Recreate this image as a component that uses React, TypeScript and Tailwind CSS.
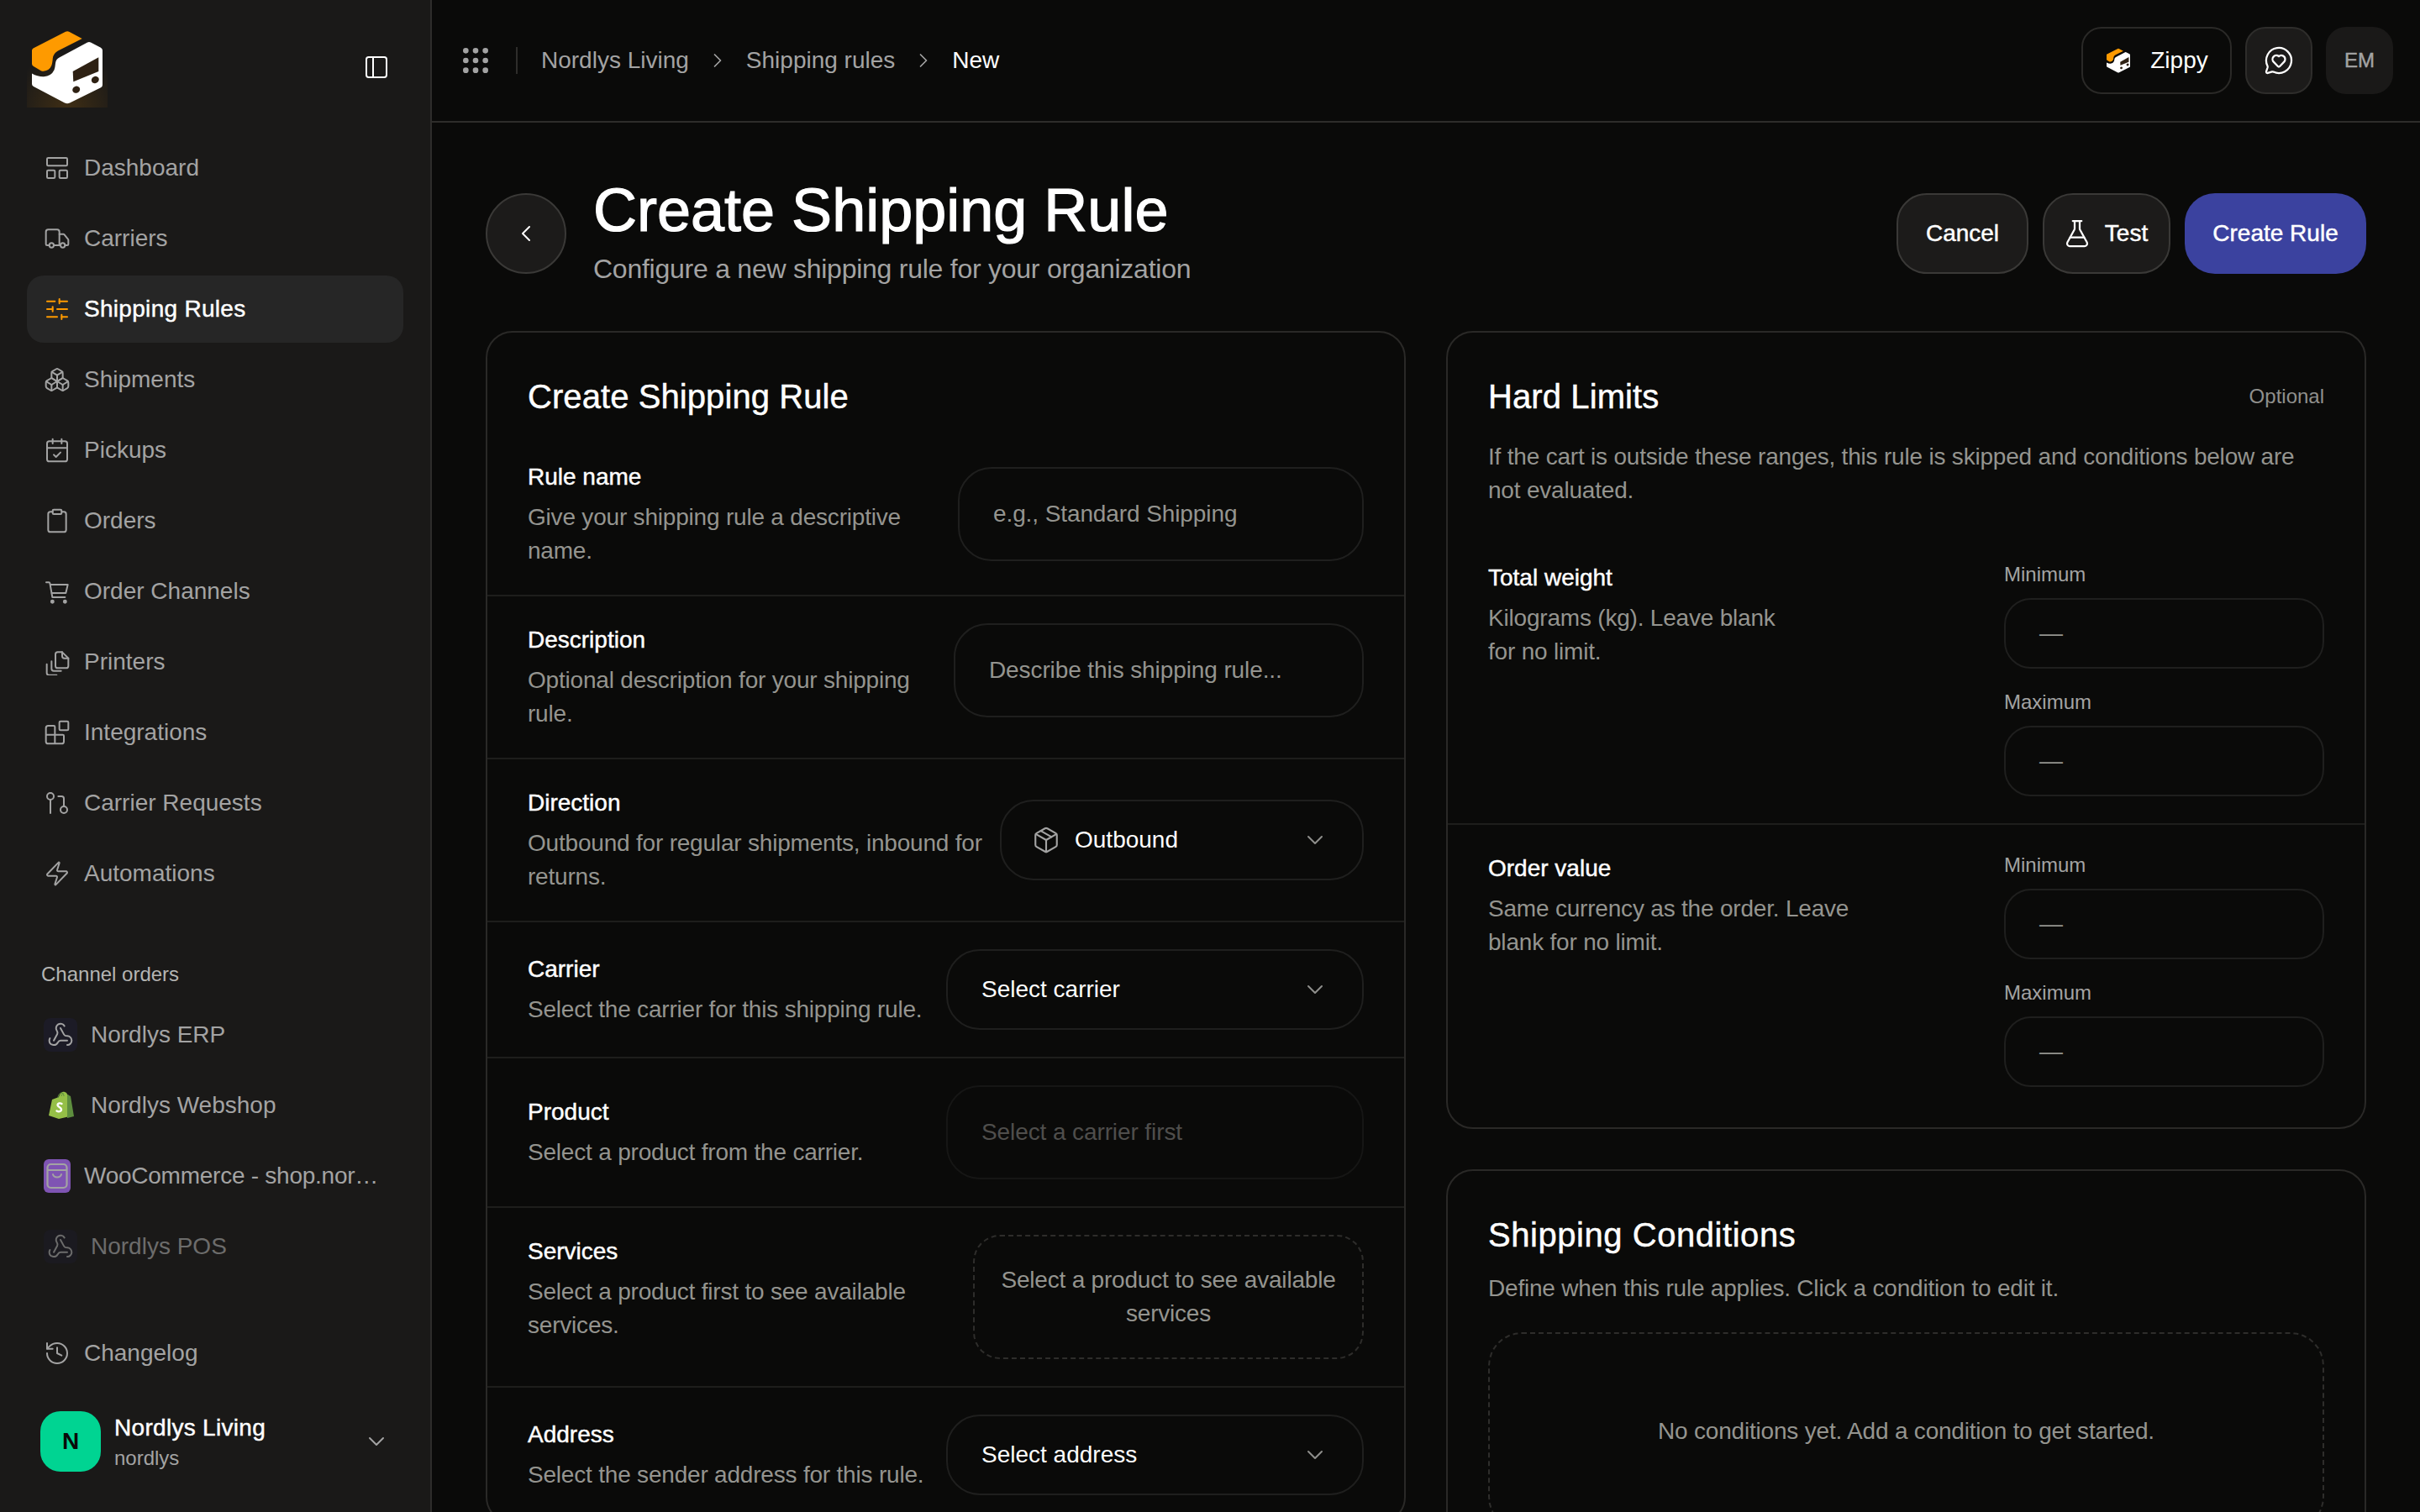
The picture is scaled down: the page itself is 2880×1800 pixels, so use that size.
import type { ReactNode } from 'react';
import {
  Blocks,
  Boxes,
  CalendarCheck,
  ChevronDown,
  ChevronLeft,
  ChevronRight,
  Clipboard,
  FlaskConical,
  GitPullRequest,
  Grip,
  History,
  LayoutPanelTop,
  MessageCircleHeart,
  Package,
  PanelLeft,
  SlidersHorizontal,
  Truck,
  Webhook,
  Zap,
} from 'lucide-react';

// Liberation Sans has no medium weight, so the medium text gets a thin stroke
const MEDIUM = '[-webkit-text-stroke:0.45px_currentColor]';
const BODY = 'text-[28px] leading-10 tracking-[-0.2px] text-[#94948f]';

function CartIcon({ size, strokeWidth }: { size?: number; strokeWidth?: number }) {
  return (
    <svg width={size} height={size} viewBox="0 0 24 24" fill="none" stroke="currentColor" strokeWidth={strokeWidth} strokeLinecap="round" strokeLinejoin="round">
      <path d="M2.250 4h2.300c.5 0 .9.300 1 .8L7.750 17.250H19" />
      <path d="M5.900 6h15.600l-1.750 7.500H7.200" />
      <circle cx="7.750" cy="21.250" r="1.100" fill="currentColor" />
      <circle cx="19" cy="21.250" r="1.100" fill="currentColor" />
    </svg>
  );
}

function FilesIcon({ size, strokeWidth }: { size?: number; strokeWidth?: number }) {
  return (
    <svg width={size} height={size} viewBox="0 0 24 24" fill="none" stroke="currentColor" strokeWidth={strokeWidth} strokeLinecap="round" strokeLinejoin="round">
      <path d="M12.500 3.250h4l5.500 5.500v6.750a2 2 0 0 1-2 2h-7.500a2 2 0 0 1-2-2V5.250a2 2 0 0 1 2-2Z" />
      <path d="M16.500 3.250v3.500a2 2 0 0 0 2 2H22" />
      <path d="M7 11.500v6.500a2 2 0 0 0 2 2h6.500" />
      <path d="M2.750 14v7.750a2 2 0 0 0 2 2h6.750" />
    </svg>
  );
}

const NAV_ITEMS = [
  { label: 'Dashboard', icon: LayoutPanelTop },
  { label: 'Carriers', icon: Truck },
  { label: 'Shipping Rules', icon: SlidersHorizontal, active: true },
  { label: 'Shipments', icon: Boxes },
  { label: 'Pickups', icon: CalendarCheck },
  { label: 'Orders', icon: Clipboard },
  { label: 'Order Channels', icon: CartIcon },
  { label: 'Printers', icon: FilesIcon },
  { label: 'Integrations', icon: Blocks },
  { label: 'Carrier Requests', icon: GitPullRequest },
  { label: 'Automations', icon: Zap },
];

function ZippyLogo({ size, glow }: { size: number; glow?: boolean }) {
  return (
    <svg width={size} height={size} viewBox="0 0 96 96" className="shrink-0">
      {glow && (
        <>
          <defs>
            <radialGradient id="logo-glow" cx="50%" cy="100%" r="70%">
              <stop offset="0%" stopColor="#fe9a00" stopOpacity="0.16" />
              <stop offset="100%" stopColor="#fe9a00" stopOpacity="0" />
            </radialGradient>
          </defs>
          <rect width="96" height="96" fill="url(#logo-glow)" />
        </>
      )}
      <path
        d="M7.5 25.5 46 5.8q2.2-1 4.2 0L65.7 14 37 28.5q-5.5 3-6.2 9-.5 6-1.5 8.500-2.500 6-9.500 6.800-1.500.1-3-.6L8 47q-2-1-2-3V28q0-1.500 1.500-2.500Z"
        fill="#fe9a00"
      />
      <path
        d="M72 18.600q2-1 4 0l12 6.200q2 1.200 2 3.200v41q0 2.200-2 3.200L51 90.600q-3 1.500-6 0L8 71q-2-1-2-3V55.500q7 4 14 3.800 9-.500 12.500-8 1-2.500 1.500-8 .5-5 5-7Z"
        fill="#ffffff"
      />
      <path d="M54.700 53 85.300 36.300V53L55.300 65.300Z" fill="#2e2113" />
      <ellipse cx="58.700" cy="74.700" rx="4.600" ry="4" transform="rotate(-28 58.700 74.700)" fill="#2e2113" />
      <ellipse cx="81.300" cy="63" rx="4.600" ry="4" transform="rotate(-28 81.300 63)" fill="#2e2113" />
    </svg>
  );
}

function ShopifyBag() {
  return (
    <svg width="32" height="34" viewBox="0 0 32 34" className="shrink-0">
      <path d="M2 29 6 10l8-3c1-4 4-7 7-6 2 .5 3 2 3 3l2 1 1 25-13 3Z" fill="#95bf47" />
      <path d="M24 4l2 1 2 1 4 24-8 2Z" fill="#5e8e3e" />
      <path d="M13 8c0-3 2-6 4-6s3 2 3 4M17 6c0-2 1-3 3-3" fill="none" stroke="#5e8e3e" strokeWidth="1" />
      <path d="M17.500 15c-2-1.200-5-.6-5 1.600 0 2.400 4.500 2.400 4.500 5.200 0 2.600-3.500 3-5.500 1.600" fill="none" stroke="#ffffff" strokeWidth="2.400" strokeLinecap="round" />
    </svg>
  );
}

function WooIcon() {
  return (
    <svg width="32" height="40" viewBox="0 0 32 40" preserveAspectRatio="none" className="shrink-0">
      <rect width="32" height="40" rx="6" fill="#7f54b3" />
      <rect x="4.500" y="6" width="23" height="28" rx="4" fill="none" stroke="#a3a3a3" strokeWidth="2.200" />
      <path d="M5 13h22" stroke="#a3a3a3" strokeWidth="2" />
      <path d="M11 18c1 4.500 9 4.500 10 0" fill="none" stroke="#a3a3a3" strokeWidth="2" strokeLinecap="round" />
    </svg>
  );
}

function WebhookBadge() {
  return (
    <span className="flex size-10 shrink-0 items-center justify-center rounded-lg bg-[#1c1b26]">
      <Webhook size={32} strokeWidth={1.5} />
    </span>
  );
}

function Sidebar() {
  return (
    <aside className="flex h-full w-[514px] shrink-0 flex-col border-r-2 border-[#2e2d2b] bg-[#1a1918] px-8 pt-8 pb-12">
      <div className="mb-8 flex h-24 items-center justify-between pr-4">
        <ZippyLogo size={96} glow />
        <PanelLeft size={32} strokeWidth={1.5} className="text-white" />
      </div>

      <nav className="flex flex-col gap-1">
        {NAV_ITEMS.map((item) => (
          <div
            key={item.label}
            className={`flex h-20 items-center gap-4 rounded-[20px] px-5 text-[28px] ${
              item.active ? `bg-[#262626] tracking-[0.3px] text-white ${MEDIUM}` : 'text-[#a3a3a3]'
            }`}
          >
            <span className={item.active ? 'text-[#fe9a00]' : ''}>
              <item.icon size={32} strokeWidth={1.5} />
            </span>
            <span>{item.label}</span>
          </div>
        ))}
      </nav>

      <div className="mt-16 mb-4 pl-[17px] text-[24px] leading-8 text-[#b5b5b3]">Channel orders</div>
      <div className="flex flex-col gap-1 text-[28px] text-[#a3a3a3]">
        <div className="flex h-20 items-center gap-4 px-5">
          <WebhookBadge />
          <span>Nordlys ERP</span>
        </div>
        <div className="flex h-20 items-center gap-4 px-5">
          <span className="flex w-10 shrink-0 justify-center">
            <ShopifyBag />
          </span>
          <span>Nordlys Webshop</span>
        </div>
        <div className="flex h-20 items-center gap-4 px-5">
          <WooIcon />
          <span className="truncate tracking-[-0.25px]">WooCommerce - shop.nordlys.no</span>
        </div>
        <div className="flex h-20 items-center gap-4 px-5 opacity-60">
          <WebhookBadge />
          <span>Nordlys POS</span>
        </div>
      </div>

      <div className="mt-auto flex h-20 items-center gap-4 px-5 text-[28px] text-[#a3a3a3]">
        <History size={32} strokeWidth={1.5} />
        <span>Changelog</span>
      </div>
      <div className="mt-[29px] flex items-center gap-4 pr-4 pl-4">
        <div className="flex size-[72px] shrink-0 items-center justify-center rounded-3xl bg-[#00d492] text-[28px] font-bold text-[#0a0a0a]">
          N
        </div>
        <div className="min-w-0 flex-1">
          <div className={`text-[28px] leading-10 tracking-[0.3px] text-white ${MEDIUM}`}>Nordlys Living</div>
          <div className="text-[24px] leading-8 text-[#a3a3a3]">nordlys</div>
        </div>
        <ChevronDown size={32} strokeWidth={1.5} className="text-[#a3a3a3]" />
      </div>
    </aside>
  );
}

function TopBar() {
  return (
    <header className="flex h-[146px] shrink-0 items-center border-b-2 border-[#2e2d2b] pr-8 pl-8">
      <Grip size={40} className="text-[#a3a3a3]" />
      <div className="mx-7 h-8 w-0.5 bg-[#2e2d2b]" />
      <div className="flex items-center gap-5 text-[28px] text-[#a3a3a3]">
        <span>Nordlys Living</span>
        <ChevronRight size={28} strokeWidth={1.5} />
        <span>Shipping rules</span>
        <ChevronRight size={28} strokeWidth={1.5} />
        <span className="text-white">New</span>
      </div>
      <div className="ml-auto flex items-center gap-4">
        <div className="flex h-20 w-[179px] items-center justify-center gap-[22px] rounded-3xl border-2 border-[#2a2927] text-[28px] text-white">
          <ZippyLogo size={32} />
          <span>Zippy</span>
        </div>
        <div className="flex size-20 items-center justify-center rounded-3xl border-2 border-[#2e2d2b] bg-[#1c1b1a] text-white">
          <MessageCircleHeart size={36} strokeWidth={1.5} />
        </div>
        <div className={`flex size-20 items-center justify-center rounded-3xl bg-[#1a1918] text-[24px] text-[#a3a3a3] ${MEDIUM}`}>
          EM
        </div>
      </div>
    </header>
  );
}

function PageHeader() {
  return (
    <div className="mb-12 flex items-center justify-between">
      <div className="flex items-center gap-8">
        <div className="flex size-24 items-center justify-center rounded-full border-2 border-[#3a3937] bg-[#1c1b1a] text-white">
          <ChevronLeft size={32} strokeWidth={1.5} />
        </div>
        <div>
          <h1 className="text-[72px] leading-20 font-normal text-white [-webkit-text-stroke:1.2px_currentColor]">
            Create Shipping Rule
          </h1>
          <p className="mt-[6px] mb-[2px] text-[32px] leading-12 tracking-[-0.25px] text-[#a3a3a3]">Configure a new shipping rule for your organization</p>
        </div>
      </div>
      <div className={`flex items-center gap-[17px] text-[28px] text-white ${MEDIUM}`}>
        <div className="flex h-24 w-[157px] items-center justify-center rounded-[36px] border-2 border-[#3a3937] bg-[#1c1b1a]">Cancel</div>
        <div className="flex h-24 w-[152px] items-center justify-center gap-[15px] rounded-[36px] border-2 border-[#3a3937] bg-[#1c1b1a] pr-1">
          <FlaskConical size={36} strokeWidth={1.5} />
          <span>Test</span>
        </div>
        <div className="flex h-24 w-[216px] items-center justify-center rounded-[36px] bg-[#3b429f]">Create Rule</div>
      </div>
    </div>
  );
}

function FormRow({
  label,
  description,
  controlClass,
  children,
  textTop,
  last,
}: {
  label: string;
  description: ReactNode;
  controlClass: string;
  children: ReactNode;
  textTop?: boolean;
  last?: boolean;
}) {
  return (
    <div className={`flex items-center justify-between px-12 py-8 ${last ? '' : 'border-b-2 border-[#1e1e1c]'}`}>
      <div className={`min-w-0 whitespace-nowrap ${textTop ? 'self-start' : ''}`}>
        <div className={`text-[28px] leading-10 text-white ${MEDIUM}`}>{label}</div>
        <div className={`mt-2 ${BODY}`}>{description}</div>
      </div>
      <div className={`shrink-0 ${controlClass}`}>{children}</div>
    </div>
  );
}

function TextField({ text, disabled }: { text: string; disabled?: boolean }) {
  return (
    <div
      className={`flex h-28 items-center rounded-[40px] border-2 px-10 text-[28px] tracking-[-0.1px] ${
        disabled ? 'border-[#161615] text-[#4f4e4c]' : 'border-[#1f1f1e] text-[#94948f]'
      }`}
    >
      {text}
    </div>
  );
}

function SelectField({ text, icon }: { text: string; icon?: ReactNode }) {
  return (
    <div className={`flex h-24 items-center rounded-[40px] border-2 border-[#1f1f1e] pr-10 text-[28px] text-white ${icon ? 'pl-9' : 'pl-10'}`}>
      {icon}
      <span>{text}</span>
      <ChevronDown size={32} strokeWidth={1.5} className="ml-auto text-[#8f8f8c]" />
    </div>
  );
}

function RuleCard() {
  return (
    <section className="rounded-[32px] border-2 border-[#2a2927]">
      <h2 className={`px-12 pt-12 pb-4 text-[40px] leading-14 font-normal tracking-[0.08px] text-white ${MEDIUM}`}>Create Shipping Rule</h2>
      <FormRow
        label="Rule name"
        description={<>Give your shipping rule a descriptive<br />name.</>}
        controlClass="w-[483px]"
      >
        <TextField text="e.g., Standard Shipping" />
      </FormRow>
      <FormRow
        label="Description"
        description={<>Optional description for your shipping<br />rule.</>}
        controlClass="w-[488px] self-start"
      >
        <TextField text="Describe this shipping rule..." />
      </FormRow>
      <FormRow
        label="Direction"
        description={<>Outbound for regular shipments, inbound for<br />returns.</>}
        controlClass="w-[433px]"
      >
        <SelectField text="Outbound" icon={<Package size={34} strokeWidth={1.5} className="mr-[17px] text-[#a3a3a3]" />} />
      </FormRow>
      <FormRow label="Carrier" description="Select the carrier for this shipping rule." controlClass="w-[497px]">
        <SelectField text="Select carrier" />
      </FormRow>
      <FormRow label="Product" description="Select a product from the carrier." controlClass="w-[497px]">
        <TextField text="Select a carrier first" disabled />
      </FormRow>
      <FormRow
        label="Services"
        description={<>Select a product first to see available<br />services.</>}
        controlClass="w-[465px]"
        textTop
      >
        <div className="flex h-[148px] items-center justify-center rounded-[32px] border-2 border-dashed border-[#2e2d2b] px-5 text-center text-[28px] leading-10 tracking-[-0.2px] text-[#94948f]">
          Select a product to see available services
        </div>
      </FormRow>
      <FormRow label="Address" description="Select the sender address for this rule." controlClass="w-[497px]" last>
        <SelectField text="Select address" />
      </FormRow>
    </section>
  );
}

function RangeField({ label }: { label: string }) {
  return (
    <div>
      <div className="mb-3 text-[24px] leading-8 text-[#a3a3a3]">{label}</div>
      <div className="flex h-[84px] items-center rounded-[32px] border-2 border-[#1f1f1e] px-10 text-[28px] text-[#94948f]">—</div>
    </div>
  );
}

function LimitRow({ label, description, divided }: { label: string; description: ReactNode; divided?: boolean }) {
  return (
    <div className={`flex justify-between px-12 ${divided ? 'border-b-2 border-[#1e1e1c] py-8' : 'pt-8 pb-12'}`}>
      <div className="whitespace-nowrap">
        <div className={`text-[28px] leading-10 text-white ${MEDIUM}`}>{label}</div>
        <div className={`mt-2 ${BODY}`}>{description}</div>
      </div>
      <div className="flex w-[381px] flex-col gap-6">
        <RangeField label="Minimum" />
        <RangeField label="Maximum" />
      </div>
    </div>
  );
}

function SideColumn() {
  return (
    <div className="flex flex-col gap-12">
      <section className="rounded-[32px] border-2 border-[#2a2927]">
        <div className="px-12 pt-12 pb-8">
          <div className="flex items-center justify-between">
            <h2 className={`text-[40px] leading-14 font-normal tracking-[0.1px] text-white ${MEDIUM}`}>Hard Limits</h2>
            <span className="text-[24px] text-[#8f8f8c]">Optional</span>
          </div>
          <p className={`mt-6 ${BODY}`}>
            If the cart is outside these ranges, this rule is skipped and conditions below are<br />not evaluated.
          </p>
        </div>
        <LimitRow label="Total weight" description={<>Kilograms (kg). Leave blank<br />for no limit.</>} divided />
        <LimitRow label="Order value" description={<>Same currency as the order. Leave<br />blank for no limit.</>} />
      </section>

      <section className="rounded-[32px] border-2 border-[#2a2927] px-12 pt-12 pb-12">
        <h2 className={`text-[40px] leading-14 font-normal tracking-[0.55px] text-white ${MEDIUM}`}>Shipping Conditions</h2>
        <p className={`mt-4 ${BODY}`}>Define when this rule applies. Click a condition to edit it.</p>
        <div className={`mt-8 rounded-[40px] border-2 border-dashed border-[#2e2d2b] py-24 text-center ${BODY}`}>
          No conditions yet. Add a condition to get started.
        </div>
      </section>
    </div>
  );
}

export default function App() {
  return (
    <div className="flex h-screen overflow-hidden bg-[#0a0a09] font-['Liberation_Sans',Arial,sans-serif]">
      <Sidebar />
      <div className="flex min-w-0 flex-1 flex-col">
        <TopBar />
        <main className="min-h-0 flex-1 overflow-hidden px-16 pt-16">
          <PageHeader />
          <div className="grid grid-cols-[1095px_1fr] items-start gap-12">
            <RuleCard />
            <SideColumn />
          </div>
        </main>
      </div>
    </div>
  );
}
